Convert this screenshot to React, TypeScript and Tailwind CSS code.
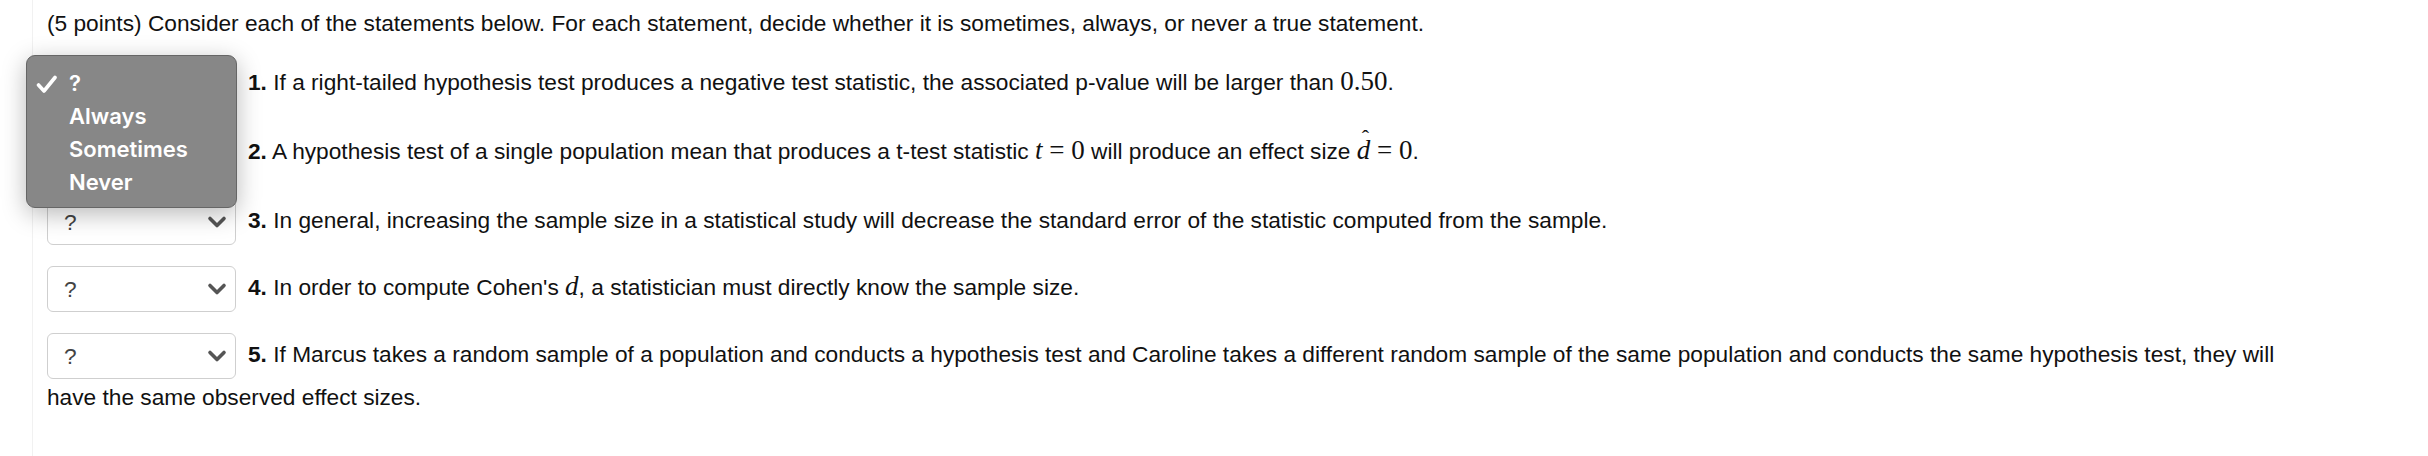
import React from "react";

function Chevron() {
  return (
    <svg width="20" height="14" viewBox="0 0 20 14" className="block">
      <path d="M3 3.5 L10 10.5 L17 3.5" fill="none" stroke="#555" strokeWidth="3.6" strokeLinecap="round" strokeLinejoin="round" />
    </svg>
  );
}

function Sel() {
  return (
    <span className="inline-flex align-middle items-center justify-between w-[189px] h-[46px] border-[1.5px] border-[#cfcfcf] rounded-[6px] pl-[16px] pr-[8px] mr-[12px] text-[#444] bg-white">
      <span>?</span>
      <Chevron />
    </span>
  );
}

const serif = "font-['Liberation_Serif',serif] text-[27px]";

export default function App() {
  return (
    <div className="relative min-h-screen bg-white font-['Liberation_Sans',Arial,sans-serif] text-[22.7px] text-[#111] leading-[26px]">
      <div className="ml-[32px] border-l border-[#f1f1f1] pl-[14px] pr-[110px] pt-[10px] min-h-[456px]">
        <div>(5 points) Consider each of the statements below. For each statement, decide whether it is sometimes, always, or never a true statement.</div>
        <div className="mt-[25px]">
          <Sel />
          <b>1.</b> If a right-tailed hypothesis test produces a negative test statistic, the associated p-value will be larger than <span className={serif}>0.50</span>.
        </div>
        <div className="mt-[23px]">
          <Sel />
          <b>2.</b> A hypothesis test of a single population mean that produces a t-test statistic <span className={serif}><i>t</i> = 0</span> will produce an effect size{" "}
          <span className={serif}>
            <span className="relative inline-block">
              <i>d</i>
              <span className="absolute left-[5px] top-[-12px] text-[22px]">ˆ</span>
            </span>{" "}
            = 0
          </span>
          .
        </div>
        <div className="mt-[23px]">
          <Sel />
          <b>3.</b> In general, increasing the sample size in a statistical study will decrease the standard error of the statistic computed from the sample.
        </div>
        <div className="mt-[21px]">
          <Sel />
          <b>4.</b> In order to compute Cohen's <span className={serif}><i>d</i></span>, a statistician must directly know the sample size.
        </div>
        <div className="mt-[21px] leading-[36px]">
          <Sel />
          <b>5.</b> If Marcus takes a random sample of a population and conducts a hypothesis test and Caroline takes a different random sample of the same population and conducts the same hypothesis test, they will have the same observed effect sizes.
        </div>
      </div>

      <div className="absolute left-[26px] top-[55px] w-[211px] h-[153px] rounded-[9px] bg-[#878787] border border-[#666] shadow-[0_6px_24px_rgba(0,0,0,0.28)] pt-[11px] font-['Inter',sans-serif] font-semibold text-white text-[22px] leading-[33px]">
        <div className="relative pl-[42px]">
          <svg width="22" height="20" viewBox="0 0 22 20" className="absolute left-[9px] top-[8px]">
            <path d="M2.5 10 L8 16 L19 2.5" fill="none" stroke="white" strokeWidth="3.6" strokeLinecap="round" strokeLinejoin="round" />
          </svg>
          <span>?</span>
        </div>
        <div className="pl-[42px]">Always</div>
        <div className="pl-[42px]">Sometimes</div>
        <div className="pl-[42px]">Never</div>
      </div>
    </div>
  );
}
